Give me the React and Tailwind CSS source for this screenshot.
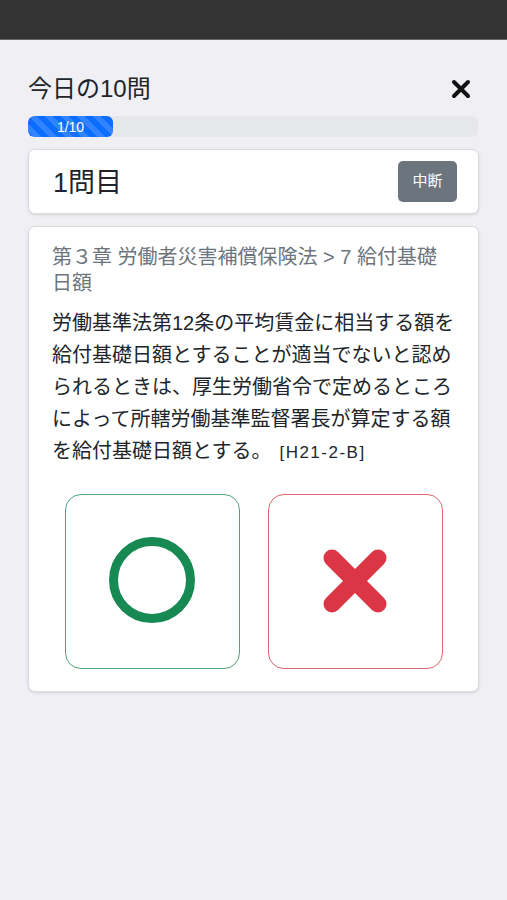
import React from 'react';

function App() {
  return (
    <div className="min-h-screen w-full bg-[#efeff4] font-['Liberation_Sans','Noto_Sans_CJK_JP',sans-serif] text-[#212529]">
      <div className="h-[40px] bg-[#333333] border-b border-[#666]" />
      <div className="px-[28px]">
        <div className="flex items-center justify-between h-[66px] pt-[32px]">
          <h1 className="text-[24px] leading-none">今日の10問</h1>
          <svg width="20" height="20" viewBox="0 0 20 20" className="mr-[8px]">
            <path d="M3 3 L17 17 M17 3 L3 17" stroke="#111" strokeWidth="4" strokeLinecap="round" />
          </svg>
        </div>
        <div className="mt-[10px] h-[21px] w-[450px] rounded-[6px] bg-[#e6e7eb] overflow-hidden">
          <div className="h-full w-[85px] rounded-[6px] bg-[#0d6efd] bg-[linear-gradient(45deg,rgba(255,255,255,.15)_25%,transparent_25%,transparent_50%,rgba(255,255,255,.15)_50%,rgba(255,255,255,.15)_75%,transparent_75%,transparent)] bg-[length:16px_16px] flex items-center justify-center text-white text-[14px] leading-none">
            1/10
          </div>
        </div>
        <div className="mt-[12px] w-[451px] h-[65px] bg-white rounded-[7px] border border-[#dcdcdf] shadow-[0_1px_3px_rgba(0,0,0,0.12)] flex items-center justify-between pl-[24px] pr-[21px]">
          <div className="text-[27px] leading-none pt-[3px]">1問目</div>
          <button className="w-[59px] h-[41px] rounded-[5px] bg-[#6c757d] text-white text-[15px]">中断</button>
        </div>
        <div className="mt-[12px] w-[451px] bg-white rounded-[7px] border border-[#dcdcdf] shadow-[0_1px_3px_rgba(0,0,0,0.12)] pt-[17px] pb-[22px] px-[23px]">
          <div className="text-[20px] leading-[26px] text-[#6c757d]">
            第３章 労働者災害補償保険法 &gt; 7 給付基礎<br />日額
          </div>
          <p className="mt-[11px] text-[20px] leading-[32px]">
            労働基準法第12条の平均賃金に相当する額を給付基礎日額とすることが適当でないと認められるときは、厚生労働省令で定めるところによって所轄労働基準監督署長が算定する額を給付基礎日額とする。
            <span className="ml-[8px] text-[17px] tracking-[1.5px] leading-[20px]">[H21-2-B]</span>
          </p>
          <div className="mt-[27px] flex justify-center gap-[28px]">
            <button className="w-[175px] h-[175px] rounded-[16px] border border-[#52a57c] flex items-center justify-center bg-white">
              <svg width="90" height="90" viewBox="0 0 90 90">
                <circle cx="45" cy="43" r="38.5" fill="none" stroke="#168a52" strokeWidth="9" />
              </svg>
            </button>
            <button className="w-[175px] h-[175px] rounded-[16px] border border-[#e2666f] flex items-center justify-center bg-white">
              <svg width="66" height="66" viewBox="0 0 66 66">
                <path d="M10 9 L56 55 M56 9 L10 55" stroke="#dc3545" strokeWidth="17" strokeLinecap="round" />
              </svg>
            </button>
          </div>
        </div>
      </div>
    </div>
  );
}

export default App;
